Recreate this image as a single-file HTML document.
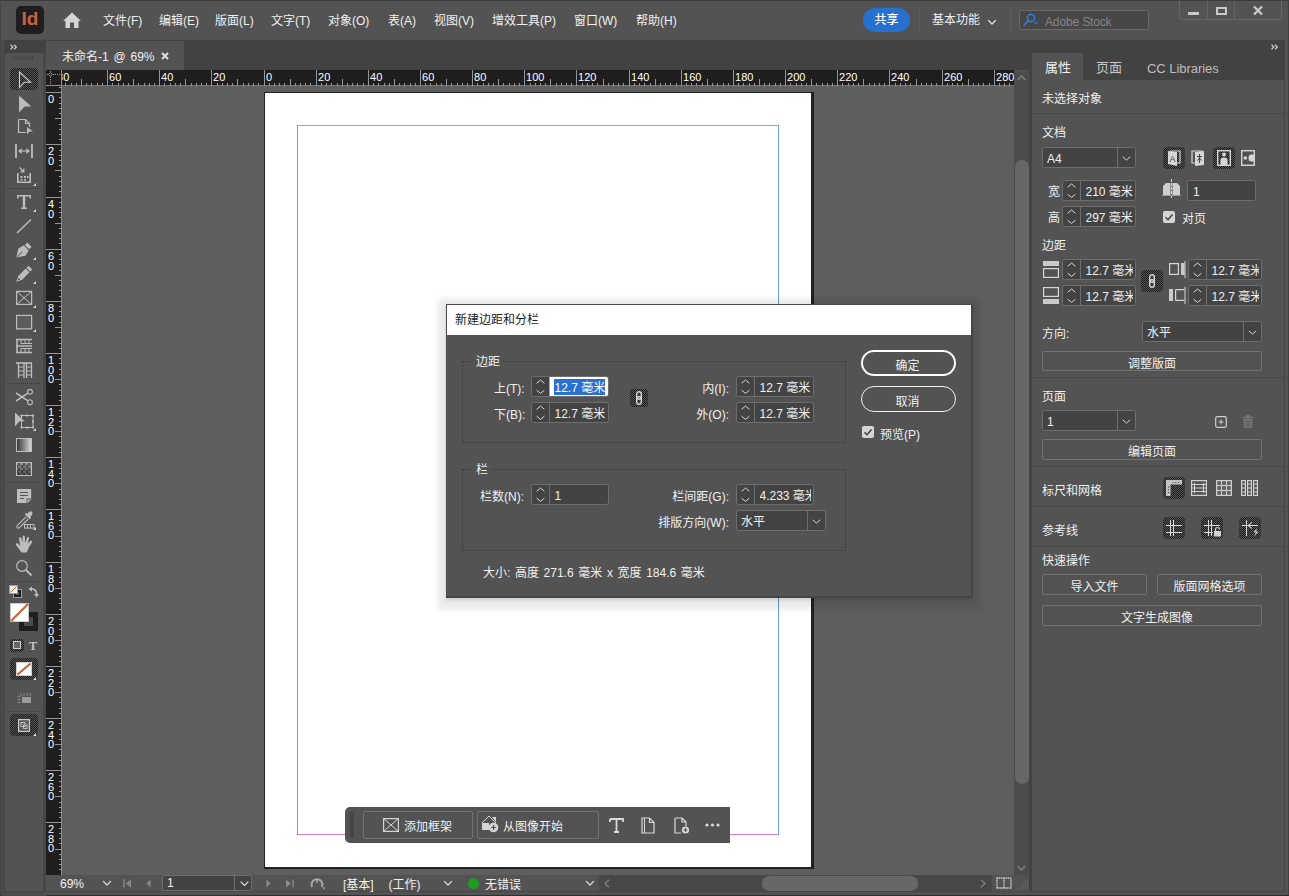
<!DOCTYPE html>
<html lang="zh-CN"><head><meta charset="utf-8"><title>未命名-1 @ 69% - Adobe InDesign</title>
<style>
*{box-sizing:border-box}
html,body{margin:0;padding:0}
body{width:1289px;height:896px;overflow:hidden;position:relative;background:#535353;
 font-family:"Liberation Sans","Noto Sans CJK SC",sans-serif;font-size:12px;color:#f0f0f0;line-height:16px;
 -webkit-font-smoothing:antialiased}
.a{position:absolute}
.t{position:absolute;white-space:nowrap;line-height:16px;height:16px}
.fld{position:absolute;background:#434343;border:1px solid #6e6e6e;border-radius:2.5px;overflow:hidden}
.fld .dv{position:absolute;top:0;bottom:0;width:1px;background:#6e6e6e}
.fld .v{position:absolute;top:3px;right:2px;overflow:hidden;white-space:nowrap;line-height:16px}
.btn{position:absolute;border:1px solid #727272;border-radius:2px;text-align:center;line-height:19px;padding-top:2.5px;white-space:nowrap}
.sep{position:absolute;height:1px;background-image:linear-gradient(90deg,#3d3d3d 1px,transparent 1px);background-size:2px 1px}
.ib{position:absolute;border-radius:4px;background:#393838 conic-gradient(#1f1d1e 25%,#535353 0 50%,#1f1d1e 0 75%,#535353 0) 0 0/2px 2px}
svg{position:absolute;overflow:visible}
</style></head>
<body>
<div class="a" style="left:0px;top:0px;width:1289px;height:1px;background:#3b3b3b;"></div>
<div class="a" style="left:0px;top:0px;width:1px;height:896px;background:#474747;"></div>
<div class="a" style="left:1288px;top:0px;width:1px;height:896px;background:#404040;"></div>
<div class="a" style="left:0px;top:895px;width:1289px;height:1px;background:#2e2e2e;"></div>
<div class="a" style="left:16px;top:6px;width:28px;height:28px;border-radius:5px;background:#211d1e"></div>
<div class="t" style="left:21.6px;top:7px;font-weight:bold;font-size:19px;line-height:24px;height:24px;color:#c6633f">Id</div>
<svg style="left:62px;top:12px" width="20" height="17" viewBox="0 0 20 17" ><path d="M10 0.5 L19 9 L16.5 9 L16.5 16 L12 16 L12 10.5 L8 10.5 L8 16 L3.5 16 L3.5 9 L1 9 Z" fill="#d4d6d4"/></svg>
<div class="t" style="left:103px;top:13px;">文件(F)</div>
<div class="t" style="left:159px;top:13px;">编辑(E)</div>
<div class="t" style="left:215px;top:13px;">版面(L)</div>
<div class="t" style="left:271px;top:13px;">文字(T)</div>
<div class="t" style="left:328px;top:13px;">对象(O)</div>
<div class="t" style="left:388px;top:13px;">表(A)</div>
<div class="t" style="left:434px;top:13px;">视图(V)</div>
<div class="t" style="left:492px;top:13px;">增效工具(P)</div>
<div class="t" style="left:574px;top:13px;">窗口(W)</div>
<div class="t" style="left:636px;top:13px;">帮助(H)</div>
<div class="a" style="left:863px;top:8px;width:47px;height:24px;border-radius:12px;background:#2671d0;color:#fff;text-align:center;line-height:25px;font-weight:500">共享</div>
<div class="a" style="left:919px;top:10px;width:1px;height:21px;background:#5e5e5e;"></div>
<div class="t" style="left:932px;top:12px;">基本功能</div>
<svg style="left:988px;top:20px" width="8" height="5" viewBox="0 0 8 5" ><path d="M0.5 0.5 L4.0 4 L7.5 0.5" fill="none" stroke="#e0e0e0" stroke-width="1.3" stroke-linecap="round" stroke-linejoin="round"/></svg>
<div class="a" style="left:1010px;top:10px;width:1px;height:21px;background:#5e5e5e;"></div>
<div class="a" style="left:1019px;top:10px;width:130px;height:20px;background:#474747;border:1px solid #686868;border-radius:3px"></div>
<svg style="left:1023px;top:13px" width="16" height="14" viewBox="0 0 16 14" ><circle cx="8" cy="5" r="3.6" fill="none" stroke="#2d7fe0" stroke-width="1.5"/><path d="M5.3 7.8 L1.2 12" stroke="#2d7fe0" stroke-width="1.7" stroke-linecap="round"/><path d="M11 9 L15 9 L13 11.3 Z" fill="#2d7fe0"/></svg>
<div class="t" style="left:1045px;top:14px;color:#858585;letter-spacing:-0.15px">Adobe Stock</div>
<div class="a" style="left:1179px;top:-3px;width:103px;height:23px;border:1px solid #646464;border-radius:3px"></div>
<div class="a" style="left:1207px;top:1px;width:1px;height:18px;background:#646464;"></div>
<div class="a" style="left:1234px;top:1px;width:1px;height:18px;background:#646464;"></div>
<div class="a" style="left:1188px;top:12px;width:11px;height:3px;background:#c8c8c8;"></div>
<div class="a" style="left:1216px;top:7px;width:11px;height:8px;border:2px solid #c8c8c8"></div>
<svg style="left:1253px;top:6px" width="10" height="9" viewBox="0 0 10 9" ><path d="M1 0.5 L9 8.500 M9 0.5 L1 8.500" stroke="#c8c8c8" stroke-width="2.400"/></svg>
<div class="a" style="left:1px;top:40px;width:1284px;height:30px;background:#424242;"></div>
<div class="a" style="left:46px;top:41px;width:138px;height:29px;background:#535353;"></div>
<div class="t" style="left:62px;top:49px;word-spacing:1.5px">未命名-1 @ 69%</div>
<svg style="left:161px;top:52px" width="8" height="8" viewBox="0 0 8 8" ><path d="M1 1 L7 7 M7 1 L1 7" stroke="#e4e4e4" stroke-width="1.8"/></svg>
<div class="a" style="left:1px;top:40px;width:45px;height:856px;background:#4b4b4b;"></div>
<div class="a" style="left:5px;top:52px;width:38px;height:839px;background:#535353;"></div>
<div class="a" style="left:4px;top:40px;width:1px;height:852px;background:#444;"></div>
<div class="a" style="left:43px;top:40px;width:3px;height:852px;background:#474747;"></div>
<div class="a" style="left:4px;top:40px;width:42px;height:13px;background:#424242;"></div>
<svg style="left:10px;top:44px" width="8" height="6" viewBox="0 0 8 6" ><path d="M0.5 0.7 L2.800 3 L0.5 5.300 M4 0.7 L6.300 3 L4 5.300" fill="none" stroke="#d4d4d4" stroke-width="1.2"/></svg>
<div class="a" style="left:14px;top:56px;width:20px;height:4px;background-image:linear-gradient(90deg,#444 1px,transparent 1px);background-size:2px 4px"></div>
<div class="ib" style="left:10px;top:68px;width:28px;height:22px;border-radius:4px"></div>
<svg style="left:10px;top:68px" width="28" height="22" viewBox="0 0 28 22" ><path d="M9.500 4 L20.500 14.300 H14.300 L9.500 19.500 Z" fill="none" stroke="#cfcfcf" stroke-width="1.100" stroke-linejoin="miter"/></svg>
<svg style="left:10px;top:92px" width="28" height="24" viewBox="0 0 28 24" ><path d="M9.100 3.500 L21.200 14.500 H14.600 L9.100 20.400 Z" fill="#bdbdbd"/></svg>
<svg style="left:10px;top:116px" width="28" height="22" viewBox="0 0 28 22" ><path d="M8.500 3.500 H15.500 L19.500 7.500 V11 M8.500 3.500 V16.500 H16 M15.500 3.500 V7.500 H19.500" fill="none" stroke="#bdbdbd" stroke-width="1.200"/><path d="M17 11 L23 15.500 H19.500 L17 18.500 Z" fill="#bdbdbd"/></svg>
<svg style="left:10px;top:140px" width="28" height="22" viewBox="0 0 28 22" ><path d="M6 4 V18 M22 4 V18" stroke="#bdbdbd" stroke-width="1.800"/><path d="M10.500 11 H17.500" stroke="#bdbdbd" stroke-width="1.100"/><path d="M8 11 L11.700 8.200 V13.800 Z M20 11 L16.300 8.200 V13.800 Z" fill="#bdbdbd"/></svg>
<svg style="left:10px;top:165px" width="28" height="22" viewBox="0 0 28 22" ><path d="M7.800 8 V17.200 H20.200 V8" fill="none" stroke="#bdbdbd" stroke-width="1.600"/><path d="M10.500 11 h2 v2 h-2 z M14 11 h2 v2 h-2 z M10.500 14 h2 v1.500 h-2 z M14 14 h2 v1.500 h-2 z M17 11 h1.500 v2 h-1.500 z" fill="#bdbdbd"/><path d="M9.500 2.500 L13.500 6.500 M13.800 3.500 V6.800 H10.500" fill="none" stroke="#bdbdbd" stroke-width="1.200"/></svg>
<svg style="left:33px;top:183px" width="3" height="3" viewBox="0 0 3 3" ><path d="M3 0 V3 H0 Z" fill="#d8d8d8"/></svg>
<div class="sep" style="left:7px;top:188px;width:35px;background-image:linear-gradient(90deg,#3e3e3e 1px,transparent 1px);background-size:2px 1px"></div>
<svg style="left:10px;top:190px" width="28" height="22" viewBox="0 0 28 22" ><path d="M7 5 H21 V8.500 H19.600 V6.600 H15.200 V17.500 H17 V19 H11 V17.500 H12.800 V6.600 H8.400 V8.500 H7 Z" fill="#bdbdbd"/></svg>
<svg style="left:33px;top:209px" width="3" height="3" viewBox="0 0 3 3" ><path d="M3 0 V3 H0 Z" fill="#d8d8d8"/></svg>
<svg style="left:10px;top:215px" width="28" height="22" viewBox="0 0 28 22" ><path d="M21 4.500 L7 18" stroke="#bdbdbd" stroke-width="1.500"/></svg>
<svg style="left:8.5px;top:240px" width="28" height="22" viewBox="0 0 28 22" ><g transform="rotate(46 14 11)"><path d="M11 2 h6 v3.500 h-6 z" fill="#bdbdbd"/><path d="M10.500 6.500 h7 l1.500 6 L14 20.500 L9 12.500 Z" fill="#bdbdbd"/><path d="M14 12 V20" stroke="#535353" stroke-width="0.900"/></g></svg>
<svg style="left:33px;top:257px" width="3" height="3" viewBox="0 0 3 3" ><path d="M3 0 V3 H0 Z" fill="#d8d8d8"/></svg>
<svg style="left:9px;top:264px" width="28" height="22" viewBox="0 0 28 22" ><g transform="rotate(45 14 11)"><path d="M11.300 0.500 h5.400 v3 h-5.400 z" fill="#bdbdbd"/><path d="M11.300 4.500 h5.400 v10.500 l-2.700 5.500 l-2.700 -5.500 z" fill="#bdbdbd"/><path d="M12.800 16 h2.400 l-1.200 2.500 z" fill="#535353"/></g></svg>
<svg style="left:33px;top:281px" width="3" height="3" viewBox="0 0 3 3" ><path d="M3 0 V3 H0 Z" fill="#d8d8d8"/></svg>
<svg style="left:10px;top:287px" width="28" height="22" viewBox="0 0 28 22" ><rect x="6.600" y="4.400" width="15" height="13" fill="none" stroke="#bdbdbd" stroke-width="1.200"/><path d="M6.600 4.400 L21.600 17.400 M21.600 4.400 L6.600 17.400" stroke="#bdbdbd" stroke-width="1"/></svg>
<svg style="left:33px;top:305px" width="3" height="3" viewBox="0 0 3 3" ><path d="M3 0 V3 H0 Z" fill="#d8d8d8"/></svg>
<svg style="left:10px;top:311px" width="28" height="22" viewBox="0 0 28 22" ><rect x="6.600" y="4.400" width="15" height="13.500" fill="#5c5c5c" stroke="#bdbdbd" stroke-width="1.200"/></svg>
<svg style="left:33px;top:329px" width="3" height="3" viewBox="0 0 3 3" ><path d="M3 0 V3 H0 Z" fill="#d8d8d8"/></svg>
<svg style="left:10px;top:335px" width="28" height="22" viewBox="0 0 28 22" ><path d="M6 4.500 H22 M6 11 H22 M6 17.500 H22" stroke="#bdbdbd" stroke-width="1.400"/><path d="M7 4 V18" stroke="#bdbdbd" stroke-width="1.600"/><path d="M11 4.500 V8.500 H22 M15 4.500 V8.500 M19 4.500 V8.500 M11 17.500 V13.500 H22 M15 17.500 V13.500 M19 17.500 V13.500" fill="none" stroke="#bdbdbd" stroke-width="1"/></svg>
<svg style="left:10px;top:359px" width="28" height="22" viewBox="0 0 28 22" ><path d="M6 4 H22" stroke="#bdbdbd" stroke-width="1.600"/><path d="M8.500 4 V19 M14 4 V19 M16.500 4 V19 M21.500 4 V19" stroke="#bdbdbd" stroke-width="1.300"/><path d="M8.500 8 H14 M8.500 12 H14 M8.500 16 H14 M16.500 8 H21.500 M16.500 12 H21.500 M16.500 16 H21.500" stroke="#bdbdbd" stroke-width="1"/></svg>
<div class="sep" style="left:7px;top:383px;width:35px;background-image:linear-gradient(90deg,#3e3e3e 1px,transparent 1px);background-size:2px 1px"></div>
<svg style="left:10px;top:386px" width="28" height="22" viewBox="0 0 28 22" ><circle cx="20" cy="5.800" r="2.400" fill="none" stroke="#bdbdbd" stroke-width="1.100"/><circle cx="20" cy="16.200" r="2.400" fill="none" stroke="#bdbdbd" stroke-width="1.100"/><path d="M6 7 L18 14.800 M6 15 L18 7.200" stroke="#bdbdbd" stroke-width="1.500"/></svg>
<svg style="left:10px;top:410px" width="28" height="22" viewBox="0 0 28 22" ><rect x="11.500" y="5.500" width="11.500" height="12" fill="none" stroke="#bdbdbd" stroke-width="1"/><path d="M10.500 4.500 h2 v2 h-2 z M16.200 4.500 h2 v2 h-2 z M22 4.500 h2 v2 h-2 z M22 10.500 h2 v2 h-2 z M22 16.500 h2 v2 h-2 z M16.200 16.500 h2 v2 h-2 z M10.500 16.500 h2 v2 h-2 z" fill="#bdbdbd"/><path d="M5 2.500 L14.700 11.300 H9.500 L5 16.500 Z" fill="#bdbdbd"/></svg>
<svg style="left:33px;top:428px" width="3" height="3" viewBox="0 0 3 3" ><path d="M3 0 V3 H0 Z" fill="#d8d8d8"/></svg>
<div class="a" style="left:16px;top:438px;width:16px;height:14px;border:1px solid #bdbdbd;background:linear-gradient(90deg,#3c3c3c,#8e8e8e 55%,#d8d8d8)"></div>
<div class="a" style="left:16px;top:462px;width:16px;height:14px;border:1px solid #bdbdbd;background-color:#4a4a4a;background-image:linear-gradient(180deg,rgba(150,150,150,0.35),rgba(40,40,40,0.55)),conic-gradient(#8a8a8a 25%,#3a3a3a 0 50%,#8a8a8a 0 75%,#3a3a3a 0);background-size:100% 100%,5px 5px;background-position:0 0,1px 0"></div>
<div class="sep" style="left:7px;top:482px;width:35px;background-image:linear-gradient(90deg,#3e3e3e 1px,transparent 1px);background-size:2px 1px"></div>
<svg style="left:10px;top:485px" width="28" height="22" viewBox="0 0 28 22" ><path d="M7 4 H21.200 V13.600 H16.600 V18 H7 Z" fill="#bdbdbd"/><path d="M17.400 14.400 H21.200 L17.400 18 Z" fill="#bdbdbd"/><path d="M10 7.500 H18 M10 10.500 H18 M10 13.500 H14" stroke="#535353" stroke-width="1"/></svg>
<svg style="left:10px;top:509px" width="28" height="22" viewBox="0 0 28 22" ><path d="M18.800 3.200 Q20.500 1.600 22 3 Q23.400 4.500 21.800 6.200 L20.300 7.700 L21.200 8.600 L19.600 10.200 L14.800 5.400 L16.400 3.800 L17.300 4.700 Z" fill="#bdbdbd"/><path d="M16 7.800 L7.200 16.600 Q6.300 18 7.300 18.700 Q8.200 19.500 9.400 18.800 L18.200 10" fill="none" stroke="#bdbdbd" stroke-width="1.100"/><rect x="14.500" y="15.500" width="9.500" height="3.600" fill="none" stroke="#bdbdbd" stroke-width="1"/><path d="M17.500 15.500 V19 M20.500 15.500 V19" stroke="#bdbdbd" stroke-width="0.900"/></svg>
<svg style="left:33px;top:527px" width="3" height="3" viewBox="0 0 3 3" ><path d="M3 0 V3 H0 Z" fill="#d8d8d8"/></svg>
<svg style="left:10px;top:533px" width="28" height="22" viewBox="0 0 28 22" ><path d="M11.5 19.5 L6.2 12.3 Q5.3 10.900 6.500 10.300 Q7.600 9.900 8.600 11 L10.300 13 L9 5.800 Q8.800 4.500 9.900 4.300 Q11 4.100 11.300 5.400 L12.400 10 L12.600 3.800 Q12.700 2.600 13.800 2.600 Q14.900 2.700 14.900 3.900 L15 10 L16.900 4.900 Q17.300 3.800 18.300 4.100 Q19.300 4.500 19 5.700 L17.700 10.800 L20.300 8 Q21.100 7.200 21.900 7.900 Q22.500 8.600 21.900 9.500 L18.800 14.600 Q17.800 18 16.500 19.500 Z" fill="#bdbdbd"/></svg>
<svg style="left:10px;top:557px" width="28" height="22" viewBox="0 0 28 22" ><circle cx="12" cy="9" r="5.300" fill="none" stroke="#bdbdbd" stroke-width="1.200"/><path d="M16 13 L21.500 18.500" stroke="#bdbdbd" stroke-width="2"/></svg>
<div class="sep" style="left:7px;top:581px;width:35px;background-image:linear-gradient(90deg,#3e3e3e 1px,transparent 1px);background-size:2px 1px"></div>
<svg style="left:9px;top:585px" width="13" height="13" viewBox="0 0 13 13" ><rect x="4.500" y="4.500" width="8" height="8" fill="#1f1d1e" stroke="#9a9a9a" stroke-width="1"/><rect x="7" y="7" width="3" height="3" fill="#535353"/><rect x="0.500" y="0.500" width="8" height="8" fill="#f4f4f4" stroke="#9a9a9a" stroke-width="1"/><path d="M1.500 7.500 L7.500 1.500" stroke="#d0703c" stroke-width="1"/></svg>
<svg style="left:28px;top:586px" width="12" height="12" viewBox="0 0 12 12" ><path d="M3 3 Q8.500 2.500 8.500 8.500" fill="none" stroke="#bdbdbd" stroke-width="1.500"/><path d="M0.500 3 L4 0.500 V5.500 Z M8.500 11.500 L6 8 H11 Z" fill="#bdbdbd"/></svg>
<div class="a" style="left:19px;top:612px;width:19px;height:19px;background:#1f1d1e"></div>
<div class="a" style="left:24px;top:617px;width:9px;height:9px;background:#4a4a4a"></div>
<div class="a" style="left:10px;top:603px;width:19px;height:19px;background:#fff;border:1px solid #c9c9c9"></div>
<svg style="left:10px;top:603px" width="19" height="19" viewBox="0 0 19 19" ><path d="M1 18 L18 1" stroke="#c8633c" stroke-width="2.200"/></svg>
<div class="ib" style="left:10px;top:639px;width:14px;height:13px;border-radius:3px"></div>
<div class="a" style="left:13px;top:641px;width:8px;height:8px;border:1px solid #cfcfcf;background:#666"></div>
<div class="t" style="left:29px;top:638px;font-family:'Liberation Serif',serif;font-weight:bold;font-size:12px;color:#c8c8c8">T</div>
<div class="ib" style="left:10px;top:658px;width:28px;height:22px;border-radius:4px"></div>
<div class="a" style="left:16px;top:662px;width:16px;height:14px;background:#fff;border:1px solid #cfcfcf"></div>
<svg style="left:16px;top:662px" width="16" height="14" viewBox="0 0 16 14" ><path d="M1.500 12.500 L14.500 1.500" stroke="#c8633c" stroke-width="2.200"/></svg>
<svg style="left:33px;top:677px" width="3" height="3" viewBox="0 0 3 3" ><path d="M3 0 V3 H0 Z" fill="#e0e0e0"/></svg>
<svg style="left:17px;top:692px" width="15" height="13" viewBox="0 0 15 13" ><rect x="5" y="5" width="9" height="6" fill="#9c9c9c"/><path d="M4 1 v3 M7 1 v3 M10 1 v3 M13 1 v3" stroke="#8c8c8c" stroke-width="1"/><path d="M0.500 4.500 h3 M0.500 7.500 h3 M0.500 10.500 h3" stroke="#7c7c7c" stroke-width="1.500"/></svg>
<div class="sep" style="left:7px;top:711px;width:35px;background-image:linear-gradient(90deg,#3e3e3e 1px,transparent 1px);background-size:2px 1px"></div>
<div class="ib" style="left:10px;top:714px;width:28px;height:22px;border-radius:4px"></div>
<svg style="left:18px;top:719px" width="12" height="13" viewBox="0 0 12 13" ><rect x="0.600" y="0.600" width="10.800" height="11.800" fill="#5a5a5a" stroke="#c9c9c9" stroke-width="1.200"/><rect x="3" y="3.500" width="4" height="4" fill="none" stroke="#c9c9c9" stroke-width="0.900"/><rect x="5.500" y="6" width="3.500" height="3.500" fill="none" stroke="#c9c9c9" stroke-width="0.900"/></svg>
<svg style="left:33px;top:733px" width="3" height="3" viewBox="0 0 3 3" ><path d="M3 0 V3 H0 Z" fill="#e0e0e0"/></svg>
<div class="a" style="left:62px;top:86px;width:952px;height:789px;background:#5e5e5e;"></div>
<svg style="left:46px;top:70px" width="968" height="17" viewBox="0 0 968 17" ><rect x="0" y="0" width="968" height="15" fill="#1f1d1e"/><rect x="0" y="15" width="968" height="1" fill="#747474"/><rect x="19" y="13" width="1" height="3" fill="#959595"/><rect x="19" y="16" width="1" height="1" fill="#959595" opacity="0.3"/><rect x="25" y="13" width="1" height="3" fill="#959595"/><rect x="25" y="16" width="1" height="1" fill="#959595" opacity="0.3"/><rect x="30" y="13" width="1" height="3" fill="#959595"/><rect x="30" y="16" width="1" height="1" fill="#959595" opacity="0.3"/><rect x="35" y="9" width="1" height="7" fill="#959595"/><rect x="35" y="16" width="1" height="1" fill="#959595" opacity="0.3"/><rect x="40" y="13" width="1" height="3" fill="#959595"/><rect x="40" y="16" width="1" height="1" fill="#959595" opacity="0.3"/><rect x="45" y="13" width="1" height="3" fill="#959595"/><rect x="45" y="16" width="1" height="1" fill="#959595" opacity="0.3"/><rect x="51" y="13" width="1" height="3" fill="#959595"/><rect x="51" y="16" width="1" height="1" fill="#959595" opacity="0.3"/><rect x="56" y="13" width="1" height="3" fill="#959595"/><rect x="56" y="16" width="1" height="1" fill="#959595" opacity="0.3"/><rect x="61" y="0" width="1" height="16" fill="#959595"/><rect x="61" y="16" width="1" height="1" fill="#959595" opacity="0.3"/><rect x="66" y="13" width="1" height="3" fill="#959595"/><rect x="66" y="16" width="1" height="1" fill="#959595" opacity="0.3"/><rect x="72" y="13" width="1" height="3" fill="#959595"/><rect x="72" y="16" width="1" height="1" fill="#959595" opacity="0.3"/><rect x="77" y="13" width="1" height="3" fill="#959595"/><rect x="77" y="16" width="1" height="1" fill="#959595" opacity="0.3"/><rect x="82" y="13" width="1" height="3" fill="#959595"/><rect x="82" y="16" width="1" height="1" fill="#959595" opacity="0.3"/><rect x="87" y="9" width="1" height="7" fill="#959595"/><rect x="87" y="16" width="1" height="1" fill="#959595" opacity="0.3"/><rect x="92" y="13" width="1" height="3" fill="#959595"/><rect x="92" y="16" width="1" height="1" fill="#959595" opacity="0.3"/><rect x="98" y="13" width="1" height="3" fill="#959595"/><rect x="98" y="16" width="1" height="1" fill="#959595" opacity="0.3"/><rect x="103" y="13" width="1" height="3" fill="#959595"/><rect x="103" y="16" width="1" height="1" fill="#959595" opacity="0.3"/><rect x="108" y="13" width="1" height="3" fill="#959595"/><rect x="108" y="16" width="1" height="1" fill="#959595" opacity="0.3"/><rect x="113" y="0" width="1" height="16" fill="#959595"/><rect x="113" y="16" width="1" height="1" fill="#959595" opacity="0.3"/><rect x="118" y="13" width="1" height="3" fill="#959595"/><rect x="118" y="16" width="1" height="1" fill="#959595" opacity="0.3"/><rect x="124" y="13" width="1" height="3" fill="#959595"/><rect x="124" y="16" width="1" height="1" fill="#959595" opacity="0.3"/><rect x="129" y="13" width="1" height="3" fill="#959595"/><rect x="129" y="16" width="1" height="1" fill="#959595" opacity="0.3"/><rect x="134" y="13" width="1" height="3" fill="#959595"/><rect x="134" y="16" width="1" height="1" fill="#959595" opacity="0.3"/><rect x="139" y="9" width="1" height="7" fill="#959595"/><rect x="139" y="16" width="1" height="1" fill="#959595" opacity="0.3"/><rect x="145" y="13" width="1" height="3" fill="#959595"/><rect x="145" y="16" width="1" height="1" fill="#959595" opacity="0.3"/><rect x="150" y="13" width="1" height="3" fill="#959595"/><rect x="150" y="16" width="1" height="1" fill="#959595" opacity="0.3"/><rect x="155" y="13" width="1" height="3" fill="#959595"/><rect x="155" y="16" width="1" height="1" fill="#959595" opacity="0.3"/><rect x="160" y="13" width="1" height="3" fill="#959595"/><rect x="160" y="16" width="1" height="1" fill="#959595" opacity="0.3"/><rect x="165" y="0" width="1" height="16" fill="#959595"/><rect x="165" y="16" width="1" height="1" fill="#959595" opacity="0.3"/><rect x="171" y="13" width="1" height="3" fill="#959595"/><rect x="171" y="16" width="1" height="1" fill="#959595" opacity="0.3"/><rect x="176" y="13" width="1" height="3" fill="#959595"/><rect x="176" y="16" width="1" height="1" fill="#959595" opacity="0.3"/><rect x="181" y="13" width="1" height="3" fill="#959595"/><rect x="181" y="16" width="1" height="1" fill="#959595" opacity="0.3"/><rect x="186" y="13" width="1" height="3" fill="#959595"/><rect x="186" y="16" width="1" height="1" fill="#959595" opacity="0.3"/><rect x="191" y="9" width="1" height="7" fill="#959595"/><rect x="191" y="16" width="1" height="1" fill="#959595" opacity="0.3"/><rect x="197" y="13" width="1" height="3" fill="#959595"/><rect x="197" y="16" width="1" height="1" fill="#959595" opacity="0.3"/><rect x="202" y="13" width="1" height="3" fill="#959595"/><rect x="202" y="16" width="1" height="1" fill="#959595" opacity="0.3"/><rect x="207" y="13" width="1" height="3" fill="#959595"/><rect x="207" y="16" width="1" height="1" fill="#959595" opacity="0.3"/><rect x="212" y="13" width="1" height="3" fill="#959595"/><rect x="212" y="16" width="1" height="1" fill="#959595" opacity="0.3"/><rect x="218" y="0" width="1" height="16" fill="#959595"/><rect x="218" y="16" width="1" height="1" fill="#959595" opacity="0.3"/><rect x="223" y="13" width="1" height="3" fill="#959595"/><rect x="223" y="16" width="1" height="1" fill="#959595" opacity="0.3"/><rect x="228" y="13" width="1" height="3" fill="#959595"/><rect x="228" y="16" width="1" height="1" fill="#959595" opacity="0.3"/><rect x="233" y="13" width="1" height="3" fill="#959595"/><rect x="233" y="16" width="1" height="1" fill="#959595" opacity="0.3"/><rect x="238" y="13" width="1" height="3" fill="#959595"/><rect x="238" y="16" width="1" height="1" fill="#959595" opacity="0.3"/><rect x="244" y="9" width="1" height="7" fill="#959595"/><rect x="244" y="16" width="1" height="1" fill="#959595" opacity="0.3"/><rect x="249" y="13" width="1" height="3" fill="#959595"/><rect x="249" y="16" width="1" height="1" fill="#959595" opacity="0.3"/><rect x="254" y="13" width="1" height="3" fill="#959595"/><rect x="254" y="16" width="1" height="1" fill="#959595" opacity="0.3"/><rect x="259" y="13" width="1" height="3" fill="#959595"/><rect x="259" y="16" width="1" height="1" fill="#959595" opacity="0.3"/><rect x="264" y="13" width="1" height="3" fill="#959595"/><rect x="264" y="16" width="1" height="1" fill="#959595" opacity="0.3"/><rect x="270" y="0" width="1" height="16" fill="#959595"/><rect x="270" y="16" width="1" height="1" fill="#959595" opacity="0.3"/><rect x="275" y="13" width="1" height="3" fill="#959595"/><rect x="275" y="16" width="1" height="1" fill="#959595" opacity="0.3"/><rect x="280" y="13" width="1" height="3" fill="#959595"/><rect x="280" y="16" width="1" height="1" fill="#959595" opacity="0.3"/><rect x="285" y="13" width="1" height="3" fill="#959595"/><rect x="285" y="16" width="1" height="1" fill="#959595" opacity="0.3"/><rect x="291" y="13" width="1" height="3" fill="#959595"/><rect x="291" y="16" width="1" height="1" fill="#959595" opacity="0.3"/><rect x="296" y="9" width="1" height="7" fill="#959595"/><rect x="296" y="16" width="1" height="1" fill="#959595" opacity="0.3"/><rect x="301" y="13" width="1" height="3" fill="#959595"/><rect x="301" y="16" width="1" height="1" fill="#959595" opacity="0.3"/><rect x="306" y="13" width="1" height="3" fill="#959595"/><rect x="306" y="16" width="1" height="1" fill="#959595" opacity="0.3"/><rect x="311" y="13" width="1" height="3" fill="#959595"/><rect x="311" y="16" width="1" height="1" fill="#959595" opacity="0.3"/><rect x="317" y="13" width="1" height="3" fill="#959595"/><rect x="317" y="16" width="1" height="1" fill="#959595" opacity="0.3"/><rect x="322" y="0" width="1" height="16" fill="#959595"/><rect x="322" y="16" width="1" height="1" fill="#959595" opacity="0.3"/><rect x="327" y="13" width="1" height="3" fill="#959595"/><rect x="327" y="16" width="1" height="1" fill="#959595" opacity="0.3"/><rect x="332" y="13" width="1" height="3" fill="#959595"/><rect x="332" y="16" width="1" height="1" fill="#959595" opacity="0.3"/><rect x="338" y="13" width="1" height="3" fill="#959595"/><rect x="338" y="16" width="1" height="1" fill="#959595" opacity="0.3"/><rect x="343" y="13" width="1" height="3" fill="#959595"/><rect x="343" y="16" width="1" height="1" fill="#959595" opacity="0.3"/><rect x="348" y="9" width="1" height="7" fill="#959595"/><rect x="348" y="16" width="1" height="1" fill="#959595" opacity="0.3"/><rect x="353" y="13" width="1" height="3" fill="#959595"/><rect x="353" y="16" width="1" height="1" fill="#959595" opacity="0.3"/><rect x="358" y="13" width="1" height="3" fill="#959595"/><rect x="358" y="16" width="1" height="1" fill="#959595" opacity="0.3"/><rect x="364" y="13" width="1" height="3" fill="#959595"/><rect x="364" y="16" width="1" height="1" fill="#959595" opacity="0.3"/><rect x="369" y="13" width="1" height="3" fill="#959595"/><rect x="369" y="16" width="1" height="1" fill="#959595" opacity="0.3"/><rect x="374" y="0" width="1" height="16" fill="#959595"/><rect x="374" y="16" width="1" height="1" fill="#959595" opacity="0.3"/><rect x="379" y="13" width="1" height="3" fill="#959595"/><rect x="379" y="16" width="1" height="1" fill="#959595" opacity="0.3"/><rect x="384" y="13" width="1" height="3" fill="#959595"/><rect x="384" y="16" width="1" height="1" fill="#959595" opacity="0.3"/><rect x="390" y="13" width="1" height="3" fill="#959595"/><rect x="390" y="16" width="1" height="1" fill="#959595" opacity="0.3"/><rect x="395" y="13" width="1" height="3" fill="#959595"/><rect x="395" y="16" width="1" height="1" fill="#959595" opacity="0.3"/><rect x="400" y="9" width="1" height="7" fill="#959595"/><rect x="400" y="16" width="1" height="1" fill="#959595" opacity="0.3"/><rect x="405" y="13" width="1" height="3" fill="#959595"/><rect x="405" y="16" width="1" height="1" fill="#959595" opacity="0.3"/><rect x="411" y="13" width="1" height="3" fill="#959595"/><rect x="411" y="16" width="1" height="1" fill="#959595" opacity="0.3"/><rect x="416" y="13" width="1" height="3" fill="#959595"/><rect x="416" y="16" width="1" height="1" fill="#959595" opacity="0.3"/><rect x="421" y="13" width="1" height="3" fill="#959595"/><rect x="421" y="16" width="1" height="1" fill="#959595" opacity="0.3"/><rect x="426" y="0" width="1" height="16" fill="#959595"/><rect x="426" y="16" width="1" height="1" fill="#959595" opacity="0.3"/><rect x="431" y="13" width="1" height="3" fill="#959595"/><rect x="431" y="16" width="1" height="1" fill="#959595" opacity="0.3"/><rect x="437" y="13" width="1" height="3" fill="#959595"/><rect x="437" y="16" width="1" height="1" fill="#959595" opacity="0.3"/><rect x="442" y="13" width="1" height="3" fill="#959595"/><rect x="442" y="16" width="1" height="1" fill="#959595" opacity="0.3"/><rect x="447" y="13" width="1" height="3" fill="#959595"/><rect x="447" y="16" width="1" height="1" fill="#959595" opacity="0.3"/><rect x="452" y="9" width="1" height="7" fill="#959595"/><rect x="452" y="16" width="1" height="1" fill="#959595" opacity="0.3"/><rect x="457" y="13" width="1" height="3" fill="#959595"/><rect x="457" y="16" width="1" height="1" fill="#959595" opacity="0.3"/><rect x="463" y="13" width="1" height="3" fill="#959595"/><rect x="463" y="16" width="1" height="1" fill="#959595" opacity="0.3"/><rect x="468" y="13" width="1" height="3" fill="#959595"/><rect x="468" y="16" width="1" height="1" fill="#959595" opacity="0.3"/><rect x="473" y="13" width="1" height="3" fill="#959595"/><rect x="473" y="16" width="1" height="1" fill="#959595" opacity="0.3"/><rect x="478" y="0" width="1" height="16" fill="#959595"/><rect x="478" y="16" width="1" height="1" fill="#959595" opacity="0.3"/><rect x="484" y="13" width="1" height="3" fill="#959595"/><rect x="484" y="16" width="1" height="1" fill="#959595" opacity="0.3"/><rect x="489" y="13" width="1" height="3" fill="#959595"/><rect x="489" y="16" width="1" height="1" fill="#959595" opacity="0.3"/><rect x="494" y="13" width="1" height="3" fill="#959595"/><rect x="494" y="16" width="1" height="1" fill="#959595" opacity="0.3"/><rect x="499" y="13" width="1" height="3" fill="#959595"/><rect x="499" y="16" width="1" height="1" fill="#959595" opacity="0.3"/><rect x="504" y="9" width="1" height="7" fill="#959595"/><rect x="504" y="16" width="1" height="1" fill="#959595" opacity="0.3"/><rect x="510" y="13" width="1" height="3" fill="#959595"/><rect x="510" y="16" width="1" height="1" fill="#959595" opacity="0.3"/><rect x="515" y="13" width="1" height="3" fill="#959595"/><rect x="515" y="16" width="1" height="1" fill="#959595" opacity="0.3"/><rect x="520" y="13" width="1" height="3" fill="#959595"/><rect x="520" y="16" width="1" height="1" fill="#959595" opacity="0.3"/><rect x="525" y="13" width="1" height="3" fill="#959595"/><rect x="525" y="16" width="1" height="1" fill="#959595" opacity="0.3"/><rect x="530" y="0" width="1" height="16" fill="#959595"/><rect x="530" y="16" width="1" height="1" fill="#959595" opacity="0.3"/><rect x="536" y="13" width="1" height="3" fill="#959595"/><rect x="536" y="16" width="1" height="1" fill="#959595" opacity="0.3"/><rect x="541" y="13" width="1" height="3" fill="#959595"/><rect x="541" y="16" width="1" height="1" fill="#959595" opacity="0.3"/><rect x="546" y="13" width="1" height="3" fill="#959595"/><rect x="546" y="16" width="1" height="1" fill="#959595" opacity="0.3"/><rect x="551" y="13" width="1" height="3" fill="#959595"/><rect x="551" y="16" width="1" height="1" fill="#959595" opacity="0.3"/><rect x="557" y="9" width="1" height="7" fill="#959595"/><rect x="557" y="16" width="1" height="1" fill="#959595" opacity="0.3"/><rect x="562" y="13" width="1" height="3" fill="#959595"/><rect x="562" y="16" width="1" height="1" fill="#959595" opacity="0.3"/><rect x="567" y="13" width="1" height="3" fill="#959595"/><rect x="567" y="16" width="1" height="1" fill="#959595" opacity="0.3"/><rect x="572" y="13" width="1" height="3" fill="#959595"/><rect x="572" y="16" width="1" height="1" fill="#959595" opacity="0.3"/><rect x="577" y="13" width="1" height="3" fill="#959595"/><rect x="577" y="16" width="1" height="1" fill="#959595" opacity="0.3"/><rect x="583" y="0" width="1" height="16" fill="#959595"/><rect x="583" y="16" width="1" height="1" fill="#959595" opacity="0.3"/><rect x="588" y="13" width="1" height="3" fill="#959595"/><rect x="588" y="16" width="1" height="1" fill="#959595" opacity="0.3"/><rect x="593" y="13" width="1" height="3" fill="#959595"/><rect x="593" y="16" width="1" height="1" fill="#959595" opacity="0.3"/><rect x="598" y="13" width="1" height="3" fill="#959595"/><rect x="598" y="16" width="1" height="1" fill="#959595" opacity="0.3"/><rect x="604" y="13" width="1" height="3" fill="#959595"/><rect x="604" y="16" width="1" height="1" fill="#959595" opacity="0.3"/><rect x="609" y="9" width="1" height="7" fill="#959595"/><rect x="609" y="16" width="1" height="1" fill="#959595" opacity="0.3"/><rect x="614" y="13" width="1" height="3" fill="#959595"/><rect x="614" y="16" width="1" height="1" fill="#959595" opacity="0.3"/><rect x="619" y="13" width="1" height="3" fill="#959595"/><rect x="619" y="16" width="1" height="1" fill="#959595" opacity="0.3"/><rect x="624" y="13" width="1" height="3" fill="#959595"/><rect x="624" y="16" width="1" height="1" fill="#959595" opacity="0.3"/><rect x="630" y="13" width="1" height="3" fill="#959595"/><rect x="630" y="16" width="1" height="1" fill="#959595" opacity="0.3"/><rect x="635" y="0" width="1" height="16" fill="#959595"/><rect x="635" y="16" width="1" height="1" fill="#959595" opacity="0.3"/><rect x="640" y="13" width="1" height="3" fill="#959595"/><rect x="640" y="16" width="1" height="1" fill="#959595" opacity="0.3"/><rect x="645" y="13" width="1" height="3" fill="#959595"/><rect x="645" y="16" width="1" height="1" fill="#959595" opacity="0.3"/><rect x="650" y="13" width="1" height="3" fill="#959595"/><rect x="650" y="16" width="1" height="1" fill="#959595" opacity="0.3"/><rect x="656" y="13" width="1" height="3" fill="#959595"/><rect x="656" y="16" width="1" height="1" fill="#959595" opacity="0.3"/><rect x="661" y="9" width="1" height="7" fill="#959595"/><rect x="661" y="16" width="1" height="1" fill="#959595" opacity="0.3"/><rect x="666" y="13" width="1" height="3" fill="#959595"/><rect x="666" y="16" width="1" height="1" fill="#959595" opacity="0.3"/><rect x="671" y="13" width="1" height="3" fill="#959595"/><rect x="671" y="16" width="1" height="1" fill="#959595" opacity="0.3"/><rect x="677" y="13" width="1" height="3" fill="#959595"/><rect x="677" y="16" width="1" height="1" fill="#959595" opacity="0.3"/><rect x="682" y="13" width="1" height="3" fill="#959595"/><rect x="682" y="16" width="1" height="1" fill="#959595" opacity="0.3"/><rect x="687" y="0" width="1" height="16" fill="#959595"/><rect x="687" y="16" width="1" height="1" fill="#959595" opacity="0.3"/><rect x="692" y="13" width="1" height="3" fill="#959595"/><rect x="692" y="16" width="1" height="1" fill="#959595" opacity="0.3"/><rect x="697" y="13" width="1" height="3" fill="#959595"/><rect x="697" y="16" width="1" height="1" fill="#959595" opacity="0.3"/><rect x="703" y="13" width="1" height="3" fill="#959595"/><rect x="703" y="16" width="1" height="1" fill="#959595" opacity="0.3"/><rect x="708" y="13" width="1" height="3" fill="#959595"/><rect x="708" y="16" width="1" height="1" fill="#959595" opacity="0.3"/><rect x="713" y="9" width="1" height="7" fill="#959595"/><rect x="713" y="16" width="1" height="1" fill="#959595" opacity="0.3"/><rect x="718" y="13" width="1" height="3" fill="#959595"/><rect x="718" y="16" width="1" height="1" fill="#959595" opacity="0.3"/><rect x="723" y="13" width="1" height="3" fill="#959595"/><rect x="723" y="16" width="1" height="1" fill="#959595" opacity="0.3"/><rect x="729" y="13" width="1" height="3" fill="#959595"/><rect x="729" y="16" width="1" height="1" fill="#959595" opacity="0.3"/><rect x="734" y="13" width="1" height="3" fill="#959595"/><rect x="734" y="16" width="1" height="1" fill="#959595" opacity="0.3"/><rect x="739" y="0" width="1" height="16" fill="#959595"/><rect x="739" y="16" width="1" height="1" fill="#959595" opacity="0.3"/><rect x="744" y="13" width="1" height="3" fill="#959595"/><rect x="744" y="16" width="1" height="1" fill="#959595" opacity="0.3"/><rect x="750" y="13" width="1" height="3" fill="#959595"/><rect x="750" y="16" width="1" height="1" fill="#959595" opacity="0.3"/><rect x="755" y="13" width="1" height="3" fill="#959595"/><rect x="755" y="16" width="1" height="1" fill="#959595" opacity="0.3"/><rect x="760" y="13" width="1" height="3" fill="#959595"/><rect x="760" y="16" width="1" height="1" fill="#959595" opacity="0.3"/><rect x="765" y="9" width="1" height="7" fill="#959595"/><rect x="765" y="16" width="1" height="1" fill="#959595" opacity="0.3"/><rect x="770" y="13" width="1" height="3" fill="#959595"/><rect x="770" y="16" width="1" height="1" fill="#959595" opacity="0.3"/><rect x="776" y="13" width="1" height="3" fill="#959595"/><rect x="776" y="16" width="1" height="1" fill="#959595" opacity="0.3"/><rect x="781" y="13" width="1" height="3" fill="#959595"/><rect x="781" y="16" width="1" height="1" fill="#959595" opacity="0.3"/><rect x="786" y="13" width="1" height="3" fill="#959595"/><rect x="786" y="16" width="1" height="1" fill="#959595" opacity="0.3"/><rect x="791" y="0" width="1" height="16" fill="#959595"/><rect x="791" y="16" width="1" height="1" fill="#959595" opacity="0.3"/><rect x="796" y="13" width="1" height="3" fill="#959595"/><rect x="796" y="16" width="1" height="1" fill="#959595" opacity="0.3"/><rect x="802" y="13" width="1" height="3" fill="#959595"/><rect x="802" y="16" width="1" height="1" fill="#959595" opacity="0.3"/><rect x="807" y="13" width="1" height="3" fill="#959595"/><rect x="807" y="16" width="1" height="1" fill="#959595" opacity="0.3"/><rect x="812" y="13" width="1" height="3" fill="#959595"/><rect x="812" y="16" width="1" height="1" fill="#959595" opacity="0.3"/><rect x="817" y="9" width="1" height="7" fill="#959595"/><rect x="817" y="16" width="1" height="1" fill="#959595" opacity="0.3"/><rect x="823" y="13" width="1" height="3" fill="#959595"/><rect x="823" y="16" width="1" height="1" fill="#959595" opacity="0.3"/><rect x="828" y="13" width="1" height="3" fill="#959595"/><rect x="828" y="16" width="1" height="1" fill="#959595" opacity="0.3"/><rect x="833" y="13" width="1" height="3" fill="#959595"/><rect x="833" y="16" width="1" height="1" fill="#959595" opacity="0.3"/><rect x="838" y="13" width="1" height="3" fill="#959595"/><rect x="838" y="16" width="1" height="1" fill="#959595" opacity="0.3"/><rect x="843" y="0" width="1" height="16" fill="#959595"/><rect x="843" y="16" width="1" height="1" fill="#959595" opacity="0.3"/><rect x="849" y="13" width="1" height="3" fill="#959595"/><rect x="849" y="16" width="1" height="1" fill="#959595" opacity="0.3"/><rect x="854" y="13" width="1" height="3" fill="#959595"/><rect x="854" y="16" width="1" height="1" fill="#959595" opacity="0.3"/><rect x="859" y="13" width="1" height="3" fill="#959595"/><rect x="859" y="16" width="1" height="1" fill="#959595" opacity="0.3"/><rect x="864" y="13" width="1" height="3" fill="#959595"/><rect x="864" y="16" width="1" height="1" fill="#959595" opacity="0.3"/><rect x="870" y="9" width="1" height="7" fill="#959595"/><rect x="870" y="16" width="1" height="1" fill="#959595" opacity="0.3"/><rect x="875" y="13" width="1" height="3" fill="#959595"/><rect x="875" y="16" width="1" height="1" fill="#959595" opacity="0.3"/><rect x="880" y="13" width="1" height="3" fill="#959595"/><rect x="880" y="16" width="1" height="1" fill="#959595" opacity="0.3"/><rect x="885" y="13" width="1" height="3" fill="#959595"/><rect x="885" y="16" width="1" height="1" fill="#959595" opacity="0.3"/><rect x="890" y="13" width="1" height="3" fill="#959595"/><rect x="890" y="16" width="1" height="1" fill="#959595" opacity="0.3"/><rect x="896" y="0" width="1" height="16" fill="#959595"/><rect x="896" y="16" width="1" height="1" fill="#959595" opacity="0.3"/><rect x="901" y="13" width="1" height="3" fill="#959595"/><rect x="901" y="16" width="1" height="1" fill="#959595" opacity="0.3"/><rect x="906" y="13" width="1" height="3" fill="#959595"/><rect x="906" y="16" width="1" height="1" fill="#959595" opacity="0.3"/><rect x="911" y="13" width="1" height="3" fill="#959595"/><rect x="911" y="16" width="1" height="1" fill="#959595" opacity="0.3"/><rect x="916" y="13" width="1" height="3" fill="#959595"/><rect x="916" y="16" width="1" height="1" fill="#959595" opacity="0.3"/><rect x="922" y="9" width="1" height="7" fill="#959595"/><rect x="922" y="16" width="1" height="1" fill="#959595" opacity="0.3"/><rect x="927" y="13" width="1" height="3" fill="#959595"/><rect x="927" y="16" width="1" height="1" fill="#959595" opacity="0.3"/><rect x="932" y="13" width="1" height="3" fill="#959595"/><rect x="932" y="16" width="1" height="1" fill="#959595" opacity="0.3"/><rect x="937" y="13" width="1" height="3" fill="#959595"/><rect x="937" y="16" width="1" height="1" fill="#959595" opacity="0.3"/><rect x="943" y="13" width="1" height="3" fill="#959595"/><rect x="943" y="16" width="1" height="1" fill="#959595" opacity="0.3"/><rect x="948" y="0" width="1" height="16" fill="#959595"/><rect x="948" y="16" width="1" height="1" fill="#959595" opacity="0.3"/><rect x="953" y="13" width="1" height="3" fill="#959595"/><rect x="953" y="16" width="1" height="1" fill="#959595" opacity="0.3"/><rect x="958" y="13" width="1" height="3" fill="#959595"/><rect x="958" y="16" width="1" height="1" fill="#959595" opacity="0.3"/><rect x="963" y="13" width="1" height="3" fill="#959595"/><rect x="963" y="16" width="1" height="1" fill="#959595" opacity="0.3"/></svg>
<div class="a" style="left:62px;top:70px;width:952px;height:15px;overflow:hidden;font-size:11px;line-height:15px;color:#fff"><span class="a" style="left:-56.9px;top:0px;transform:scaleY(1.06);transform-origin:0 50%">100</span><span class="a" style="left:-4.9px;top:0px;transform:scaleY(1.06);transform-origin:0 50%">80</span><span class="a" style="left:47.1px;top:0px;transform:scaleY(1.06);transform-origin:0 50%">60</span><span class="a" style="left:99.1px;top:0px;transform:scaleY(1.06);transform-origin:0 50%">40</span><span class="a" style="left:151.1px;top:0px;transform:scaleY(1.06);transform-origin:0 50%">20</span><span class="a" style="left:204.1px;top:0px;transform:scaleY(1.06);transform-origin:0 50%">0</span><span class="a" style="left:256.1px;top:0px;transform:scaleY(1.06);transform-origin:0 50%">20</span><span class="a" style="left:308.1px;top:0px;transform:scaleY(1.06);transform-origin:0 50%">40</span><span class="a" style="left:360.1px;top:0px;transform:scaleY(1.06);transform-origin:0 50%">60</span><span class="a" style="left:412.1px;top:0px;transform:scaleY(1.06);transform-origin:0 50%">80</span><span class="a" style="left:464.1px;top:0px;transform:scaleY(1.06);transform-origin:0 50%">100</span><span class="a" style="left:516.1px;top:0px;transform:scaleY(1.06);transform-origin:0 50%">120</span><span class="a" style="left:569.1px;top:0px;transform:scaleY(1.06);transform-origin:0 50%">140</span><span class="a" style="left:621.1px;top:0px;transform:scaleY(1.06);transform-origin:0 50%">160</span><span class="a" style="left:673.1px;top:0px;transform:scaleY(1.06);transform-origin:0 50%">180</span><span class="a" style="left:725.1px;top:0px;transform:scaleY(1.06);transform-origin:0 50%">200</span><span class="a" style="left:777.1px;top:0px;transform:scaleY(1.06);transform-origin:0 50%">220</span><span class="a" style="left:829.1px;top:0px;transform:scaleY(1.06);transform-origin:0 50%">240</span><span class="a" style="left:882.1px;top:0px;transform:scaleY(1.06);transform-origin:0 50%">260</span><span class="a" style="left:934.1px;top:0px;transform:scaleY(1.06);transform-origin:0 50%">280</span></div>
<div class="a" style="left:46px;top:70px;width:15px;height:15px;background:#1f1d1e;"></div>
<div class="a" style="left:61px;top:70px;width:1px;height:16px;background:#8f8f8f;"></div>
<div class="a" style="left:46px;top:85px;width:16px;height:1px;background:#8f8f8f;"></div>
<svg style="left:46px;top:70px" width="15" height="15" viewBox="0 0 15 15" ><path d="M4.5 1 V15 M1 4.5 H15" stroke="#9a9a9a" stroke-width="1" stroke-dasharray="1 1"/><rect x="3" y="3" width="3" height="3" fill="#1f1d1e"/><path d="M4.5 2.6 L6.4 4.5 L4.5 6.4 L2.6 4.5 Z" fill="none" stroke="#a8a8a8" stroke-width="0.8"/></svg>
<svg style="left:46px;top:86px" width="16" height="789" viewBox="0 0 16 789" ><rect x="0" y="0" width="15" height="789" fill="#1f1d1e"/><rect x="15" y="0" width="1" height="789" fill="#8a8a8a"/><rect x="13" y="1" width="3" height="1" fill="#959595"/><rect x="0" y="6" width="16" height="1" fill="#959595"/><rect x="13" y="11" width="3" height="1" fill="#959595"/><rect x="13" y="17" width="3" height="1" fill="#959595"/><rect x="13" y="22" width="3" height="1" fill="#959595"/><rect x="13" y="27" width="3" height="1" fill="#959595"/><rect x="9" y="32" width="7" height="1" fill="#959595"/><rect x="13" y="38" width="3" height="1" fill="#959595"/><rect x="13" y="43" width="3" height="1" fill="#959595"/><rect x="13" y="48" width="3" height="1" fill="#959595"/><rect x="13" y="53" width="3" height="1" fill="#959595"/><rect x="0" y="58" width="16" height="1" fill="#959595"/><rect x="13" y="64" width="3" height="1" fill="#959595"/><rect x="13" y="69" width="3" height="1" fill="#959595"/><rect x="13" y="74" width="3" height="1" fill="#959595"/><rect x="13" y="79" width="3" height="1" fill="#959595"/><rect x="9" y="84" width="7" height="1" fill="#959595"/><rect x="13" y="90" width="3" height="1" fill="#959595"/><rect x="13" y="95" width="3" height="1" fill="#959595"/><rect x="13" y="100" width="3" height="1" fill="#959595"/><rect x="13" y="105" width="3" height="1" fill="#959595"/><rect x="0" y="111" width="16" height="1" fill="#959595"/><rect x="13" y="116" width="3" height="1" fill="#959595"/><rect x="13" y="121" width="3" height="1" fill="#959595"/><rect x="13" y="126" width="3" height="1" fill="#959595"/><rect x="13" y="131" width="3" height="1" fill="#959595"/><rect x="9" y="137" width="7" height="1" fill="#959595"/><rect x="13" y="142" width="3" height="1" fill="#959595"/><rect x="13" y="147" width="3" height="1" fill="#959595"/><rect x="13" y="152" width="3" height="1" fill="#959595"/><rect x="13" y="157" width="3" height="1" fill="#959595"/><rect x="0" y="163" width="16" height="1" fill="#959595"/><rect x="13" y="168" width="3" height="1" fill="#959595"/><rect x="13" y="173" width="3" height="1" fill="#959595"/><rect x="13" y="178" width="3" height="1" fill="#959595"/><rect x="13" y="184" width="3" height="1" fill="#959595"/><rect x="9" y="189" width="7" height="1" fill="#959595"/><rect x="13" y="194" width="3" height="1" fill="#959595"/><rect x="13" y="199" width="3" height="1" fill="#959595"/><rect x="13" y="204" width="3" height="1" fill="#959595"/><rect x="13" y="210" width="3" height="1" fill="#959595"/><rect x="0" y="215" width="16" height="1" fill="#959595"/><rect x="13" y="220" width="3" height="1" fill="#959595"/><rect x="13" y="225" width="3" height="1" fill="#959595"/><rect x="13" y="230" width="3" height="1" fill="#959595"/><rect x="13" y="236" width="3" height="1" fill="#959595"/><rect x="9" y="241" width="7" height="1" fill="#959595"/><rect x="13" y="246" width="3" height="1" fill="#959595"/><rect x="13" y="251" width="3" height="1" fill="#959595"/><rect x="13" y="257" width="3" height="1" fill="#959595"/><rect x="13" y="262" width="3" height="1" fill="#959595"/><rect x="0" y="267" width="16" height="1" fill="#959595"/><rect x="13" y="272" width="3" height="1" fill="#959595"/><rect x="13" y="277" width="3" height="1" fill="#959595"/><rect x="13" y="283" width="3" height="1" fill="#959595"/><rect x="13" y="288" width="3" height="1" fill="#959595"/><rect x="9" y="293" width="7" height="1" fill="#959595"/><rect x="13" y="298" width="3" height="1" fill="#959595"/><rect x="13" y="304" width="3" height="1" fill="#959595"/><rect x="13" y="309" width="3" height="1" fill="#959595"/><rect x="13" y="314" width="3" height="1" fill="#959595"/><rect x="0" y="319" width="16" height="1" fill="#959595"/><rect x="13" y="324" width="3" height="1" fill="#959595"/><rect x="13" y="330" width="3" height="1" fill="#959595"/><rect x="13" y="335" width="3" height="1" fill="#959595"/><rect x="13" y="340" width="3" height="1" fill="#959595"/><rect x="9" y="345" width="7" height="1" fill="#959595"/><rect x="13" y="350" width="3" height="1" fill="#959595"/><rect x="13" y="356" width="3" height="1" fill="#959595"/><rect x="13" y="361" width="3" height="1" fill="#959595"/><rect x="13" y="366" width="3" height="1" fill="#959595"/><rect x="0" y="371" width="16" height="1" fill="#959595"/><rect x="13" y="377" width="3" height="1" fill="#959595"/><rect x="13" y="382" width="3" height="1" fill="#959595"/><rect x="13" y="387" width="3" height="1" fill="#959595"/><rect x="13" y="392" width="3" height="1" fill="#959595"/><rect x="9" y="397" width="7" height="1" fill="#959595"/><rect x="13" y="403" width="3" height="1" fill="#959595"/><rect x="13" y="408" width="3" height="1" fill="#959595"/><rect x="13" y="413" width="3" height="1" fill="#959595"/><rect x="13" y="418" width="3" height="1" fill="#959595"/><rect x="0" y="423" width="16" height="1" fill="#959595"/><rect x="13" y="429" width="3" height="1" fill="#959595"/><rect x="13" y="434" width="3" height="1" fill="#959595"/><rect x="13" y="439" width="3" height="1" fill="#959595"/><rect x="13" y="444" width="3" height="1" fill="#959595"/><rect x="9" y="450" width="7" height="1" fill="#959595"/><rect x="13" y="455" width="3" height="1" fill="#959595"/><rect x="13" y="460" width="3" height="1" fill="#959595"/><rect x="13" y="465" width="3" height="1" fill="#959595"/><rect x="13" y="470" width="3" height="1" fill="#959595"/><rect x="0" y="476" width="16" height="1" fill="#959595"/><rect x="13" y="481" width="3" height="1" fill="#959595"/><rect x="13" y="486" width="3" height="1" fill="#959595"/><rect x="13" y="491" width="3" height="1" fill="#959595"/><rect x="13" y="496" width="3" height="1" fill="#959595"/><rect x="9" y="502" width="7" height="1" fill="#959595"/><rect x="13" y="507" width="3" height="1" fill="#959595"/><rect x="13" y="512" width="3" height="1" fill="#959595"/><rect x="13" y="517" width="3" height="1" fill="#959595"/><rect x="13" y="523" width="3" height="1" fill="#959595"/><rect x="0" y="528" width="16" height="1" fill="#959595"/><rect x="13" y="533" width="3" height="1" fill="#959595"/><rect x="13" y="538" width="3" height="1" fill="#959595"/><rect x="13" y="543" width="3" height="1" fill="#959595"/><rect x="13" y="549" width="3" height="1" fill="#959595"/><rect x="9" y="554" width="7" height="1" fill="#959595"/><rect x="13" y="559" width="3" height="1" fill="#959595"/><rect x="13" y="564" width="3" height="1" fill="#959595"/><rect x="13" y="570" width="3" height="1" fill="#959595"/><rect x="13" y="575" width="3" height="1" fill="#959595"/><rect x="0" y="580" width="16" height="1" fill="#959595"/><rect x="13" y="585" width="3" height="1" fill="#959595"/><rect x="13" y="590" width="3" height="1" fill="#959595"/><rect x="13" y="596" width="3" height="1" fill="#959595"/><rect x="13" y="601" width="3" height="1" fill="#959595"/><rect x="9" y="606" width="7" height="1" fill="#959595"/><rect x="13" y="611" width="3" height="1" fill="#959595"/><rect x="13" y="616" width="3" height="1" fill="#959595"/><rect x="13" y="622" width="3" height="1" fill="#959595"/><rect x="13" y="627" width="3" height="1" fill="#959595"/><rect x="0" y="632" width="16" height="1" fill="#959595"/><rect x="13" y="637" width="3" height="1" fill="#959595"/><rect x="13" y="643" width="3" height="1" fill="#959595"/><rect x="13" y="648" width="3" height="1" fill="#959595"/><rect x="13" y="653" width="3" height="1" fill="#959595"/><rect x="9" y="658" width="7" height="1" fill="#959595"/><rect x="13" y="663" width="3" height="1" fill="#959595"/><rect x="13" y="669" width="3" height="1" fill="#959595"/><rect x="13" y="674" width="3" height="1" fill="#959595"/><rect x="13" y="679" width="3" height="1" fill="#959595"/><rect x="0" y="684" width="16" height="1" fill="#959595"/><rect x="13" y="689" width="3" height="1" fill="#959595"/><rect x="13" y="695" width="3" height="1" fill="#959595"/><rect x="13" y="700" width="3" height="1" fill="#959595"/><rect x="13" y="705" width="3" height="1" fill="#959595"/><rect x="9" y="710" width="7" height="1" fill="#959595"/><rect x="13" y="716" width="3" height="1" fill="#959595"/><rect x="13" y="721" width="3" height="1" fill="#959595"/><rect x="13" y="726" width="3" height="1" fill="#959595"/><rect x="13" y="731" width="3" height="1" fill="#959595"/><rect x="0" y="736" width="16" height="1" fill="#959595"/><rect x="13" y="742" width="3" height="1" fill="#959595"/><rect x="13" y="747" width="3" height="1" fill="#959595"/><rect x="13" y="752" width="3" height="1" fill="#959595"/><rect x="13" y="757" width="3" height="1" fill="#959595"/><rect x="9" y="763" width="7" height="1" fill="#959595"/><rect x="13" y="768" width="3" height="1" fill="#959595"/><rect x="13" y="773" width="3" height="1" fill="#959595"/><rect x="13" y="778" width="3" height="1" fill="#959595"/><rect x="13" y="783" width="3" height="1" fill="#959595"/></svg>
<div class="a" style="left:46px;top:86px;width:15px;height:789px;overflow:hidden;font-size:11px;line-height:9.6px;color:#fff"><span class="a" style="left:2px;top:9px;width:6px;text-align:center">0</span><span class="a" style="left:2px;top:61px;width:6px;text-align:center">2<br>0</span><span class="a" style="left:2px;top:114px;width:6px;text-align:center">4<br>0</span><span class="a" style="left:2px;top:166px;width:6px;text-align:center">6<br>0</span><span class="a" style="left:2px;top:218px;width:6px;text-align:center">8<br>0</span><span class="a" style="left:2px;top:270px;width:6px;text-align:center">1<br>0<br>0</span><span class="a" style="left:2px;top:322px;width:6px;text-align:center">1<br>2<br>0</span><span class="a" style="left:2px;top:374px;width:6px;text-align:center">1<br>4<br>0</span><span class="a" style="left:2px;top:426px;width:6px;text-align:center">1<br>6<br>0</span><span class="a" style="left:2px;top:479px;width:6px;text-align:center">1<br>8<br>0</span><span class="a" style="left:2px;top:531px;width:6px;text-align:center">2<br>0<br>0</span><span class="a" style="left:2px;top:583px;width:6px;text-align:center">2<br>2<br>0</span><span class="a" style="left:2px;top:635px;width:6px;text-align:center">2<br>4<br>0</span><span class="a" style="left:2px;top:687px;width:6px;text-align:center">2<br>6<br>0</span><span class="a" style="left:2px;top:739px;width:6px;text-align:center">2<br>8<br>0</span></div>
<div class="a" style="left:264px;top:92px;width:550px;height:777px;background:#222021;"></div>
<div class="a" style="left:265px;top:93px;width:546px;height:774px;background:#ffffff;"></div>
<div class="a" style="left:297px;top:125px;width:482px;height:1px;background:#d781c4;"></div>
<div class="a" style="left:297px;top:834px;width:482px;height:1px;background:#d781c4;"></div>
<div class="a" style="left:297px;top:125px;width:1px;height:710px;background:#6f9cf0;"></div>
<div class="a" style="left:778px;top:125px;width:1px;height:710px;background:#6f9cf0;"></div>
<div class="a" style="left:1014px;top:71px;width:15px;height:804px;background:#4c4c4c;"></div>
<div class="a" style="left:1015px;top:160px;width:14px;height:624px;border-radius:7px;background:#676767"></div>
<svg style="left:1017px;top:75px" width="9" height="6" viewBox="0 0 9 6" ><path d="M0.7 5 L4.5 1 L8.3 5" fill="none" stroke="#808080" stroke-width="1.3"/></svg>
<svg style="left:1017px;top:865px" width="9" height="6" viewBox="0 0 9 6" ><path d="M0.7 1 L4.5 5 L8.3 1" fill="none" stroke="#808080" stroke-width="1.3"/></svg>
<div class="a" style="left:1029px;top:40px;width:3px;height:852px;background:#424242;"></div>
<div class="a" style="left:46px;top:875px;width:983px;height:16px;background:#535353;"></div>
<div class="a" style="left:1px;top:891px;width:1287px;height:1px;background:#474747;"></div>
<div class="t" style="left:60px;top:876px;">69%</div>
<svg style="left:103px;top:881px" width="8" height="5" viewBox="0 0 8 5" ><path d="M0.5 0.5 L4.0 4 L7.5 0.5" fill="none" stroke="#d8d8d8" stroke-width="1.3" stroke-linecap="round" stroke-linejoin="round"/></svg>
<svg style="left:123px;top:879px" width="9" height="9" viewBox="0 0 9 9" ><path d="M1 0.5 V8.5" stroke="#8a8a8a" stroke-width="1.4"/><path d="M8 0.5 L3 4.5 L8 8.5 Z" fill="#8a8a8a"/></svg>
<svg style="left:146px;top:879px" width="5" height="9" viewBox="0 0 5 9" ><path d="M4.5 0.5 L0.5 4.5 L4.5 8.5 Z" fill="#8a8a8a"/></svg>
<div class="fld" style="left:162px;top:875px;width:90px;height:16px"><div class="dv" style="left:71px"></div><div class="v" style="left:4px;top:-1px;line-height:16px">1</div><svg style="left:77px;top:5px" width="9" height="6" viewBox="0 0 9 6"><path d="M0.7 0.7 L4.5 4.5 L8.3 0.7" fill="none" stroke="#dcdcdc" stroke-width="1.2"/></svg></div>
<svg style="left:266px;top:879px" width="5" height="9" viewBox="0 0 5 9" ><path d="M0.5 0.5 L4.5 4.5 L0.5 8.5 Z" fill="#8a8a8a"/></svg>
<svg style="left:285px;top:879px" width="9" height="9" viewBox="0 0 9 9" ><path d="M8 0.5 V8.5" stroke="#8a8a8a" stroke-width="1.4"/><path d="M1 0.5 L6 4.5 L1 8.5 Z" fill="#8a8a8a"/></svg>
<svg style="left:310px;top:877px" width="16" height="13" viewBox="0 0 16 13" ><path d="M2 10 A5.5 5.5 0 1 1 12 10" fill="none" stroke="#a8a8a8" stroke-width="2"/><path d="M7 6 V2.5" stroke="#a8a8a8" stroke-width="1.4"/><path d="M12.5 10.5 h3 l-1.5 2 z" fill="#a8a8a8"/></svg>
<div class="t" style="left:343px;top:876.5px;word-spacing:11.5px">[基本] (工作)</div>
<svg style="left:444px;top:881px" width="8" height="5" viewBox="0 0 8 5" ><path d="M0.5 0.5 L4.0 4 L7.5 0.5" fill="none" stroke="#d8d8d8" stroke-width="1.3" stroke-linecap="round" stroke-linejoin="round"/></svg>
<div class="a" style="left:468px;top:878px;width:11px;height:11px;border-radius:6px;background:#1f9d1f"></div>
<div class="t" style="left:485px;top:876.5px;">无错误</div>
<svg style="left:586px;top:881px" width="8" height="5" viewBox="0 0 8 5" ><path d="M0.5 0.5 L4.0 4 L7.5 0.5" fill="none" stroke="#d8d8d8" stroke-width="1.3" stroke-linecap="round" stroke-linejoin="round"/></svg>
<div class="a" style="left:599px;top:875px;width:393px;height:16px;background:#484848;"></div>
<div class="a" style="left:762px;top:876px;width:156px;height:15px;border-radius:7px;background:#676767"></div>
<svg style="left:604px;top:879px" width="6" height="9" viewBox="0 0 6 9" ><path d="M5 0.7 L1 4.5 L5 8.3" fill="none" stroke="#808080" stroke-width="1.3"/></svg>
<svg style="left:980px;top:879px" width="6" height="9" viewBox="0 0 6 9" ><path d="M1 0.7 L5 4.5 L1 8.3" fill="none" stroke="#808080" stroke-width="1.3"/></svg>
<svg style="left:996px;top:877px" width="16" height="12" viewBox="0 0 16 12" ><rect x="1" y="1" width="14" height="10" fill="none" stroke="#d0d0d0" stroke-width="1.4" stroke-dasharray="1.2 0.6"/><path d="M8 1 V11" stroke="#d0d0d0" stroke-width="1.4" stroke-dasharray="1.2 0.6"/></svg>
<svg style="left:1018px;top:879px" width="10" height="10" viewBox="0 0 10 10" ><path d="M9 1 v1 M7 3 h3 M5 5 h5 M3 7 h7 M1 9 h9" stroke="#6a6a6a" stroke-width="1" stroke-dasharray="1 1"/></svg>
<div class="a" style="left:1032px;top:40px;width:253px;height:40px;background:#424242;"></div>
<div class="a" style="left:1032px;top:80px;width:252px;height:811px;background:#535353;"></div>
<div class="a" style="left:1284px;top:80px;width:1px;height:812px;background:#474747;"></div>
<div class="a" style="left:1285px;top:40px;width:3px;height:852px;background:#535353;"></div>
<div class="a" style="left:1032px;top:53px;width:51px;height:27px;background:#535353;"></div>
<svg style="left:1271px;top:44px" width="8" height="6" viewBox="0 0 8 6" ><path d="M0.5 0.7 L2.800 3 L0.5 5.300 M4 0.7 L6.300 3 L4 5.300" fill="none" stroke="#d4d4d4" stroke-width="1.2"/></svg>
<div class="t" style="left:1045px;top:60px;font-size:13px">属性</div>
<div class="t" style="left:1096px;top:60px;font-size:13px;color:#c8c8c8">页面</div>
<div class="t" style="left:1147px;top:60.5px;font-size:13px;color:#bebebe;letter-spacing:-0.05px">CC Libraries</div>
<div class="t" style="left:1042px;top:91px;">未选择对象</div>
<div class="sep" style="left:1033px;top:113px;width:251px"></div>
<div class="t" style="left:1042px;top:125px;">文档</div>
<div class="fld" style="left:1042px;top:147px;width:94px;height:21px"><div class="dv" style="left:74px"></div><svg style="left:79px;top:8px" width="9" height="6" viewBox="0 0 9 6"><path d="M0.8 0.8 L4.5 4.1 L8.2 0.8" fill="none" stroke="#dadada" stroke-width="0.95" stroke-linejoin="round"/></svg><div class="v" style="left:4px">A4</div></div>
<div class="ib" style="left:1163px;top:147px;width:22px;height:22px"></div>
<svg style="left:1167px;top:150px" width="14" height="16" viewBox="0 0 14 16" ><path d="M3 1 H13 V13 H3" fill="none" stroke="#d6d6d6" stroke-width="1.2"/><path d="M1 1 L10 2 V16 L1 14 Z" fill="#d6d6d6"/><text x="5.5" y="12" font-size="9" font-family="Liberation Sans, sans-serif" fill="#444" text-anchor="middle">A</text></svg>
<svg style="left:1191px;top:150px" width="14" height="16" viewBox="0 0 14 16" ><path d="M1 1 H11 V13 H1 Z" fill="none" stroke="#d6d6d6" stroke-width="1.2"/><path d="M4 2 L13 1 V15 L4 16 Z" fill="#d6d6d6"/><path d="M8.5 4 V13 M6 6.5 H11 M6.5 10.5 L8.5 8 L10.5 10.5" stroke="#444" stroke-width="1" fill="none"/></svg>
<div class="ib" style="left:1213px;top:147px;width:22px;height:22px"></div>
<svg style="left:1217px;top:150px" width="14" height="16" viewBox="0 0 14 16" ><rect x="0.7" y="0.7" width="12.6" height="14.6" fill="none" stroke="#d6d6d6" stroke-width="1.4"/><circle cx="7" cy="4.6" r="2" fill="#d6d6d6"/><path d="M3.5 15 V10 Q3.500 7.5 7 7.5 Q10.5 7.500 10.5 10 V15 Z" fill="#d6d6d6"/></svg>
<svg style="left:1241px;top:150px" width="14" height="16" viewBox="0 0 14 16" ><rect x="0.7" y="0.7" width="12.6" height="14.6" fill="none" stroke="#d6d6d6" stroke-width="1.4"/><circle cx="4.3" cy="8" r="1.8" fill="#d6d6d6"/><path d="M13.500 4.500 H10.500 Q7.500 4.500 7.500 8 Q7.500 11.500 10.500 11.500 H13.500 Z" fill="#d6d6d6"/></svg>
<div class="t" style="left:1048px;top:184px;">宽</div>
<div class="fld" style="left:1062px;top:180px;width:74px;height:21px"><div class="dv" style="left:17px"></div><svg style="left:3px;top:1px" width="11" height="18" viewBox="0 0 11 18"><path d="M1.6 5.3 L5.5 2 L9.4 5.3 M1.6 12.2 L5.5 15.4 L9.4 12.2" fill="none" stroke="#d8d8d8" stroke-width="1" stroke-linejoin="round"/></svg><div class="v" style="left:22.5px;color:#f0f0f0">210 毫米</div></div>
<div class="t" style="left:1048px;top:210px;">高</div>
<div class="fld" style="left:1062px;top:206px;width:74px;height:21px"><div class="dv" style="left:17px"></div><svg style="left:3px;top:1px" width="11" height="18" viewBox="0 0 11 18"><path d="M1.6 5.3 L5.5 2 L9.4 5.3 M1.6 12.2 L5.5 15.4 L9.4 12.2" fill="none" stroke="#d8d8d8" stroke-width="1" stroke-linejoin="round"/></svg><div class="v" style="left:22.5px;color:#f0f0f0">297 毫米</div></div>
<svg style="left:1162px;top:179px" width="19" height="20" viewBox="0 0 19 20" ><path d="M1 7 L4 4 H8.500 V16 H1 Z M10.500 4 H15 L18 7 V16 H10.500 Z" fill="#cfcfcf"/><path d="M9.500 0 V20" stroke="#d6d6d6" stroke-width="1" stroke-dasharray="3 1"/><path d="M0 16.500 H19" stroke="#9a9a9a" stroke-width="1"/></svg>
<div class="fld" style="left:1187px;top:180px;width:69px;height:21px"><div class="v" style="left:5px">1</div></div>
<div class="a" style="left:1163px;top:211px;width:12px;height:12px;border-radius:2px;background:#d3d5d3"></div>
<svg style="left:1163px;top:211px" width="12" height="12" viewBox="0 0 12 12" ><path d="M2.500 6.200 L5 8.700 L9.500 3.500" fill="none" stroke="#404040" stroke-width="1.5"/></svg>
<div class="t" style="left:1182px;top:211px;">对页</div>
<div class="t" style="left:1042px;top:238px;">边距</div>
<svg style="left:1043px;top:261px" width="16" height="17" viewBox="0 0 16 17" ><rect x="0" y="0" width="16" height="5" fill="#c9c9c9"/><rect x="0.600" y="7.600" width="14.800" height="8.800" fill="none" stroke="#d6d6d6" stroke-width="1.2"/></svg>
<div class="fld" style="left:1062px;top:259px;width:74px;height:21px"><div class="dv" style="left:17px"></div><svg style="left:3px;top:1px" width="11" height="18" viewBox="0 0 11 18"><path d="M1.6 5.3 L5.5 2 L9.4 5.3 M1.6 12.2 L5.5 15.4 L9.4 12.2" fill="none" stroke="#d8d8d8" stroke-width="1" stroke-linejoin="round"/></svg><div class="v" style="left:22.5px;color:#f0f0f0">12.7 毫米</div></div>
<svg style="left:1043px;top:287px" width="16" height="17" viewBox="0 0 16 17" ><rect x="0.600" y="0.600" width="14.800" height="8.800" fill="none" stroke="#d6d6d6" stroke-width="1.2"/><rect x="0" y="12" width="16" height="5" fill="#c9c9c9"/></svg>
<div class="fld" style="left:1062px;top:285px;width:74px;height:21px"><div class="dv" style="left:17px"></div><svg style="left:3px;top:1px" width="11" height="18" viewBox="0 0 11 18"><path d="M1.6 5.3 L5.5 2 L9.4 5.3 M1.6 12.2 L5.5 15.4 L9.4 12.2" fill="none" stroke="#d8d8d8" stroke-width="1" stroke-linejoin="round"/></svg><div class="v" style="left:22.5px;color:#f0f0f0">12.7 毫米</div></div>
<div class="ib" style="left:1141px;top:270px;width:22px;height:22px"></div>
<svg style="left:1148px;top:274px" width="8" height="14" viewBox="0 0 8 14" ><rect x="1.700" y="0.800" width="4.600" height="7.500" rx="2.300" fill="none" stroke="#d6d6d6" stroke-width="1.4"/><rect x="1.700" y="5.700" width="4.600" height="7.500" rx="2.300" fill="none" stroke="#d6d6d6" stroke-width="1.4"/></svg>
<svg style="left:1169px;top:261px" width="17" height="17" viewBox="0 0 17 17" ><rect x="0.600" y="2.600" width="8.800" height="10.800" fill="none" stroke="#d6d6d6" stroke-width="1.2"/><rect x="12" y="2" width="3.500" height="12" fill="#c9c9c9"/><path d="M16 0 V17" stroke="#d6d6d6" stroke-width="1"/></svg>
<div class="fld" style="left:1188px;top:259px;width:74px;height:21px"><div class="dv" style="left:17px"></div><svg style="left:3px;top:1px" width="11" height="18" viewBox="0 0 11 18"><path d="M1.6 5.3 L5.5 2 L9.4 5.3 M1.6 12.2 L5.5 15.4 L9.4 12.2" fill="none" stroke="#d8d8d8" stroke-width="1" stroke-linejoin="round"/></svg><div class="v" style="left:22.5px;color:#f0f0f0">12.7 毫米</div></div>
<svg style="left:1169px;top:287px" width="17" height="17" viewBox="0 0 17 17" ><rect x="0" y="2" width="4" height="12" fill="#c9c9c9"/><path d="M6.600 2.600 H15.500 M6.600 13.400 H15.500 M6.600 2.600 V13.400" fill="none" stroke="#d6d6d6" stroke-width="1.2"/><path d="M16 0 V17" stroke="#d6d6d6" stroke-width="1"/></svg>
<div class="fld" style="left:1188px;top:285px;width:74px;height:21px"><div class="dv" style="left:17px"></div><svg style="left:3px;top:1px" width="11" height="18" viewBox="0 0 11 18"><path d="M1.6 5.3 L5.5 2 L9.4 5.3 M1.6 12.2 L5.5 15.4 L9.4 12.2" fill="none" stroke="#d8d8d8" stroke-width="1" stroke-linejoin="round"/></svg><div class="v" style="left:22.5px;color:#f0f0f0">12.7 毫米</div></div>
<div class="t" style="left:1042px;top:326px;">方向:</div>
<div class="fld" style="left:1142px;top:321px;width:120px;height:21px"><div class="dv" style="left:100px"></div><svg style="left:105px;top:8px" width="9" height="6" viewBox="0 0 9 6"><path d="M0.8 0.8 L4.5 4.1 L8.2 0.8" fill="none" stroke="#dadada" stroke-width="0.95" stroke-linejoin="round"/></svg><div class="v" style="left:4px">水平</div></div>
<div class="btn" style="left:1042px;top:351px;width:220px;height:20px">调整版面</div>
<div class="sep" style="left:1033px;top:377px;width:251px"></div>
<div class="t" style="left:1042px;top:389px;">页面</div>
<div class="fld" style="left:1042px;top:410px;width:94px;height:21px"><div class="dv" style="left:74px"></div><svg style="left:79px;top:8px" width="9" height="6" viewBox="0 0 9 6"><path d="M0.8 0.8 L4.5 4.1 L8.2 0.8" fill="none" stroke="#dadada" stroke-width="0.95" stroke-linejoin="round"/></svg><div class="v" style="left:4px">1</div></div>
<svg style="left:1215px;top:416px" width="12" height="12" viewBox="0 0 12 12" ><rect x="0.700" y="0.700" width="10.600" height="10.600" rx="1.5" fill="none" stroke="#d0d0d0" stroke-width="1.200"/><path d="M6 3.500 V8.500 M3.500 6 H8.500" stroke="#d0d0d0" stroke-width="1"/></svg>
<svg style="left:1242px;top:415px" width="12" height="13" viewBox="0 0 12 13" ><path d="M0.500 2.500 H11.500 M4 1 H8" stroke="#777" stroke-width="1.400"/><path d="M1.500 4 H10.500 L10 13 H2 Z" fill="#777"/><path d="M4 5 V12 M6 5 V12 M8 5 V12" stroke="#535353" stroke-width="0.800"/></svg>
<div class="btn" style="left:1042px;top:439px;width:220px;height:21px">编辑页面</div>
<div class="sep" style="left:1033px;top:466px;width:251px"></div>
<div class="t" style="left:1042px;top:483px;">标尺和网格</div>
<div class="ib" style="left:1163px;top:477px;width:22px;height:22px"></div>
<svg style="left:1166px;top:480px" width="16" height="16" viewBox="0 0 16 16" ><path d="M0 0 H16 V4.500 H4.500 V16 H0 Z" fill="#c4c4c4"/><path d="M6.500 2.500 H15 M2.500 6.500 V15" stroke="#3a3a3a" stroke-width="1.200" stroke-dasharray="1 1.800"/></svg>
<svg style="left:1191px;top:480px" width="16" height="16" viewBox="0 0 16 16" ><rect x="0.600" y="0.600" width="14.800" height="14.800" fill="none" stroke="#d0d0d0" stroke-width="1.200"/><path d="M0 4.500 H16 M0 8 H16 M0 11.500 H16 M3.500 3 V13 M12.500 3 V13" stroke="#d0d0d0" stroke-width="1"/></svg>
<svg style="left:1216px;top:480px" width="16" height="16" viewBox="0 0 16 16" ><rect x="0.600" y="0.600" width="14.800" height="14.800" fill="#666" stroke="#d0d0d0" stroke-width="1.200"/><path d="M0 5.500 H16 M0 10.500 H16 M5.500 0 V16 M10.500 0 V16" stroke="#d0d0d0" stroke-width="1"/></svg>
<svg style="left:1241px;top:480px" width="17" height="16" viewBox="0 0 17 16" ><g fill="none" stroke="#d0d0d0" stroke-width="1.200"><rect x="0.600" y="0.600" width="3.800" height="14.800"/><rect x="6.600" y="0.600" width="3.800" height="14.800"/><rect x="12.600" y="0.600" width="3.800" height="14.800"/><path d="M0 4 H17 M0 8 H17 M0 12 H17" stroke-dasharray="5 1"/></g></svg>
<div class="sep" style="left:1033px;top:506px;width:251px"></div>
<div class="t" style="left:1042px;top:523px;">参考线</div>
<div class="ib" style="left:1163px;top:517px;width:22px;height:22px"></div>
<div class="ib" style="left:1201px;top:517px;width:22px;height:22px"></div>
<div class="ib" style="left:1239px;top:517px;width:22px;height:22px"></div>
<svg style="left:1166px;top:520px" width="16" height="16" viewBox="0 0 16 16" ><path d="M4.500 0 V16 M7.500 0 V16 M0 5.500 H16 M0 12.500 H16" stroke="#dcdcdc" stroke-width="1"/></svg>
<svg style="left:1204px;top:520px" width="18" height="17" viewBox="0 0 18 17" ><path d="M4.500 0 V16 M7.500 0 V16 M0 5.500 H16 M0 12.500 H9" stroke="#dcdcdc" stroke-width="1"/><rect x="10" y="11" width="7" height="5.500" fill="#d0d0d0"/><path d="M11.500 11 V9.500 a2 2 0 0 1 4 0" fill="none" stroke="#d0d0d0" stroke-width="1.200"/></svg>
<svg style="left:1242px;top:520px" width="18" height="17" viewBox="0 0 18 17" ><path d="M4.500 0 V16 M0 5.500 H16" stroke="#dcdcdc" stroke-width="1"/><path d="M10 2.500 L6 5.500 L10 8.500" fill="none" stroke="#dcdcdc" stroke-width="1"/><path d="M15 8 L11.500 12.500 H14 L12 16.500 L16.500 11.500 H14 Z" fill="#d0d0d0"/></svg>
<div class="sep" style="left:1033px;top:546px;width:251px"></div>
<div class="t" style="left:1042px;top:553px;">快速操作</div>
<div class="btn" style="left:1042px;top:574px;width:105px;height:21px">导入文件</div>
<div class="btn" style="left:1157px;top:574px;width:105px;height:21px">版面网格选项</div>
<div class="btn" style="left:1042px;top:605px;width:220px;height:21px;padding-left:10px">文字生成图像</div>
<div class="a" style="left:446px;top:304px;width:526px;height:294px;box-shadow:0 3px 6px 8px rgba(0,0,0,0.085),0 2px 3px 0 rgba(0,0,0,0.12)"></div>
<div class="a" style="left:446px;top:304px;width:526px;height:294px;background:#535353;"></div>
<div class="a" style="left:446px;top:304px;width:526px;height:1px;background:#4a4a4a;"></div>
<div class="a" style="left:447px;top:305px;width:524px;height:30px;background:#ffffff;"></div>
<div class="a" style="left:446px;top:304px;width:1px;height:294px;background:#4d4d4d;"></div>
<div class="a" style="left:971px;top:305px;width:2px;height:293px;background:#464646;"></div>
<div class="a" style="left:446px;top:596px;width:527px;height:2px;background:#464646;"></div>
<div class="t" style="left:455px;top:312px;color:#1b1b1b">新建边距和分栏</div>
<div class="a" style="left:462px;top:361px;width:384px;height:82px;border:1px dotted #3a3a3a"></div>
<div class="t" style="left:473px;top:354px;background:#535353;padding:0 3px">边距</div>
<div class="t" style="left:494px;top:381px;">上(T):</div>
<div class="fld" style="left:531px;top:376px;width:78px;height:21px"><div class="dv" style="left:17px"></div><svg style="left:3px;top:1px" width="11" height="18" viewBox="0 0 11 18"><path d="M1.6 5.3 L5.5 2 L9.4 5.3 M1.6 12.2 L5.5 15.4 L9.4 12.2" fill="none" stroke="#d8d8d8" stroke-width="1" stroke-linejoin="round"/></svg><div class="a" style="left:17px;top:-1px;right:-1px;bottom:-1px;background:#fff;border:1px solid #7aa7ee;border-radius:0 3px 3px 0"></div><div class="a" style="left:22px;top:2px;right:3px;height:16px;background:#2a6fd2"></div><div class="v" style="left:22.5px;color:#fff">12.7 毫米</div></div>
<div class="t" style="left:494px;top:407px;">下(B):</div>
<div class="fld" style="left:531px;top:402px;width:78px;height:21px"><div class="dv" style="left:17px"></div><svg style="left:3px;top:1px" width="11" height="18" viewBox="0 0 11 18"><path d="M1.6 5.3 L5.5 2 L9.4 5.3 M1.6 12.2 L5.5 15.4 L9.4 12.2" fill="none" stroke="#d8d8d8" stroke-width="1" stroke-linejoin="round"/></svg><div class="v" style="left:22.5px;color:#f0f0f0">12.7 毫米</div></div>
<div class="ib" style="left:630px;top:389px;width:18px;height:18px;border-radius:3px"></div>
<svg style="left:635px;top:391px" width="8" height="14" viewBox="0 0 8 14" ><rect x="1.700" y="0.800" width="4.600" height="7.500" rx="2.300" fill="none" stroke="#d6d6d6" stroke-width="1.400"/><rect x="1.700" y="5.700" width="4.600" height="7.500" rx="2.300" fill="none" stroke="#d6d6d6" stroke-width="1.400"/></svg>
<div class="t" style="left:629px;top:381px;width:100px;text-align:right">内(I):</div>
<div class="fld" style="left:736px;top:376px;width:78px;height:21px"><div class="dv" style="left:17px"></div><svg style="left:3px;top:1px" width="11" height="18" viewBox="0 0 11 18"><path d="M1.6 5.3 L5.5 2 L9.4 5.3 M1.6 12.2 L5.5 15.4 L9.4 12.2" fill="none" stroke="#d8d8d8" stroke-width="1" stroke-linejoin="round"/></svg><div class="v" style="left:22.5px;color:#f0f0f0">12.7 毫米</div></div>
<div class="t" style="left:629px;top:407px;width:100px;text-align:right">外(O):</div>
<div class="fld" style="left:736px;top:402px;width:78px;height:21px"><div class="dv" style="left:17px"></div><svg style="left:3px;top:1px" width="11" height="18" viewBox="0 0 11 18"><path d="M1.6 5.3 L5.5 2 L9.4 5.3 M1.6 12.2 L5.5 15.4 L9.4 12.2" fill="none" stroke="#d8d8d8" stroke-width="1" stroke-linejoin="round"/></svg><div class="v" style="left:22.5px;color:#f0f0f0">12.7 毫米</div></div>
<div class="a" style="left:861px;top:350px;width:95px;height:26px;border:2px solid #fff;border-radius:13px;text-align:center;line-height:22px;padding-top:3px;padding-right:2px">确定</div>
<div class="a" style="left:861px;top:386px;width:95px;height:26px;border:1px solid #f0f0f0;border-radius:13px;text-align:center;line-height:24px;padding-top:2.5px;padding-right:2px">取消</div>
<div class="a" style="left:862px;top:426px;width:12px;height:12px;border-radius:2px;background:#d3d5d3"></div>
<svg style="left:862px;top:426px" width="12" height="12" viewBox="0 0 12 12" ><path d="M2.500 6.200 L5 8.700 L9.500 3.500" fill="none" stroke="#404040" stroke-width="1.500"/></svg>
<div class="t" style="left:880px;top:427px;">预览(P)</div>
<div class="a" style="left:462px;top:469px;width:384px;height:82px;border:1px dotted #3a3a3a"></div>
<div class="t" style="left:473px;top:462px;background:#535353;padding:0 3px">栏</div>
<div class="t" style="left:424px;top:489px;width:100px;text-align:right">栏数(N):</div>
<div class="fld" style="left:531px;top:484px;width:78px;height:21px"><div class="dv" style="left:17px"></div><svg style="left:3px;top:1px" width="11" height="18" viewBox="0 0 11 18"><path d="M1.6 5.3 L5.5 2 L9.4 5.3 M1.6 12.2 L5.5 15.4 L9.4 12.2" fill="none" stroke="#d8d8d8" stroke-width="1" stroke-linejoin="round"/></svg><div class="v" style="left:22.5px;color:#f0f0f0">1</div></div>
<div class="t" style="left:629px;top:489px;width:100px;text-align:right">栏间距(G):</div>
<div class="fld" style="left:736px;top:484px;width:78px;height:21px"><div class="dv" style="left:17px"></div><svg style="left:3px;top:1px" width="11" height="18" viewBox="0 0 11 18"><path d="M1.6 5.3 L5.5 2 L9.4 5.3 M1.6 12.2 L5.5 15.4 L9.4 12.2" fill="none" stroke="#d8d8d8" stroke-width="1" stroke-linejoin="round"/></svg><div class="v" style="left:22.5px;color:#f0f0f0">4.233 毫米</div></div>
<div class="t" style="left:609px;top:515px;width:120px;text-align:right">排版方向(W):</div>
<div class="fld" style="left:736px;top:510px;width:90px;height:21px"><div class="dv" style="left:70px"></div><svg style="left:75px;top:8px" width="9" height="6" viewBox="0 0 9 6"><path d="M0.8 0.8 L4.5 4.1 L8.2 0.8" fill="none" stroke="#dadada" stroke-width="0.95" stroke-linejoin="round"/></svg><div class="v" style="left:4px">水平</div></div>
<div class="t" style="left:483px;top:565px;word-spacing:1.3px">大小: 高度 271.6 毫米 x 宽度 184.6 毫米</div>
<div class="a" style="left:345px;top:807px;width:385px;height:36px;background:#535353;border-radius:5px 0 0 5px"></div>
<div class="a" style="left:350px;top:811px;width:4px;height:27px;border-radius:2px;background:#454545"></div>
<div class="a" style="left:363px;top:811px;width:110px;height:28px;border:1px solid #727272;border-radius:2px"></div>
<svg style="left:383px;top:818px" width="16" height="14" viewBox="0 0 16 14" ><rect x="0.600" y="0.600" width="14.800" height="12.800" fill="none" stroke="#d4d4d4" stroke-width="1.200"/><path d="M0.600 0.600 L15.400 13.400 M15.400 0.600 L0.600 13.400" stroke="#d4d4d4" stroke-width="1"/></svg>
<div class="t" style="left:404px;top:819px;">添加框架</div>
<div class="a" style="left:477px;top:811px;width:122px;height:28px;border:1px solid #727272;border-radius:2px"></div>
<svg style="left:481px;top:815px" width="18" height="18" viewBox="0 0 18 18" ><path d="M1 8 L8 1 L15 8" fill="none" stroke="#d4d4d4" stroke-width="1"/><rect x="1" y="8" width="7" height="7" fill="#d4d4d4"/><path d="M11 2 h4 v5 Z" fill="#d4d4d4"/><circle cx="12.500" cy="12.500" r="4.800" fill="#d4d4d4"/><path d="M12.500 10 V15 M10 12.500 H15" stroke="#535353" stroke-width="1.200"/></svg>
<div class="t" style="left:503px;top:819px;">从图像开始</div>
<svg style="left:609px;top:818px" width="15" height="15" viewBox="0 0 15 15" ><path d="M1 1 H14 V4 M1 1 V4 M7.500 1 V14 M5 14 H10" fill="none" stroke="#dadada" stroke-width="1.800"/></svg>
<svg style="left:641px;top:817px" width="14" height="17" viewBox="0 0 14 17" ><path d="M1 1 H8.500 L13 5.500 V16 H1 Z M8.500 1 V5.500 H13" fill="none" stroke="#dadada" stroke-width="1.200"/><path d="M3.500 1 V16" stroke="#dadada" stroke-width="1"/></svg>
<svg style="left:674px;top:817px" width="16" height="17" viewBox="0 0 16 17" ><path d="M1 1 H8 L12 5 V9 M1 1 V16 H7 M8 1 V5 H12" fill="none" stroke="#dadada" stroke-width="1.200"/><circle cx="11.500" cy="13" r="3.600" fill="#dadada"/><path d="M11.500 11 V15 M9.500 13 H13.500" stroke="#535353" stroke-width="1.200"/></svg>
<svg style="left:705px;top:823px" width="15" height="4" viewBox="0 0 15 4" ><circle cx="2" cy="2" r="1.600" fill="#dadada"/><circle cx="7.500" cy="2" r="1.600" fill="#dadada"/><circle cx="13" cy="2" r="1.600" fill="#dadada"/></svg>
</body></html>
